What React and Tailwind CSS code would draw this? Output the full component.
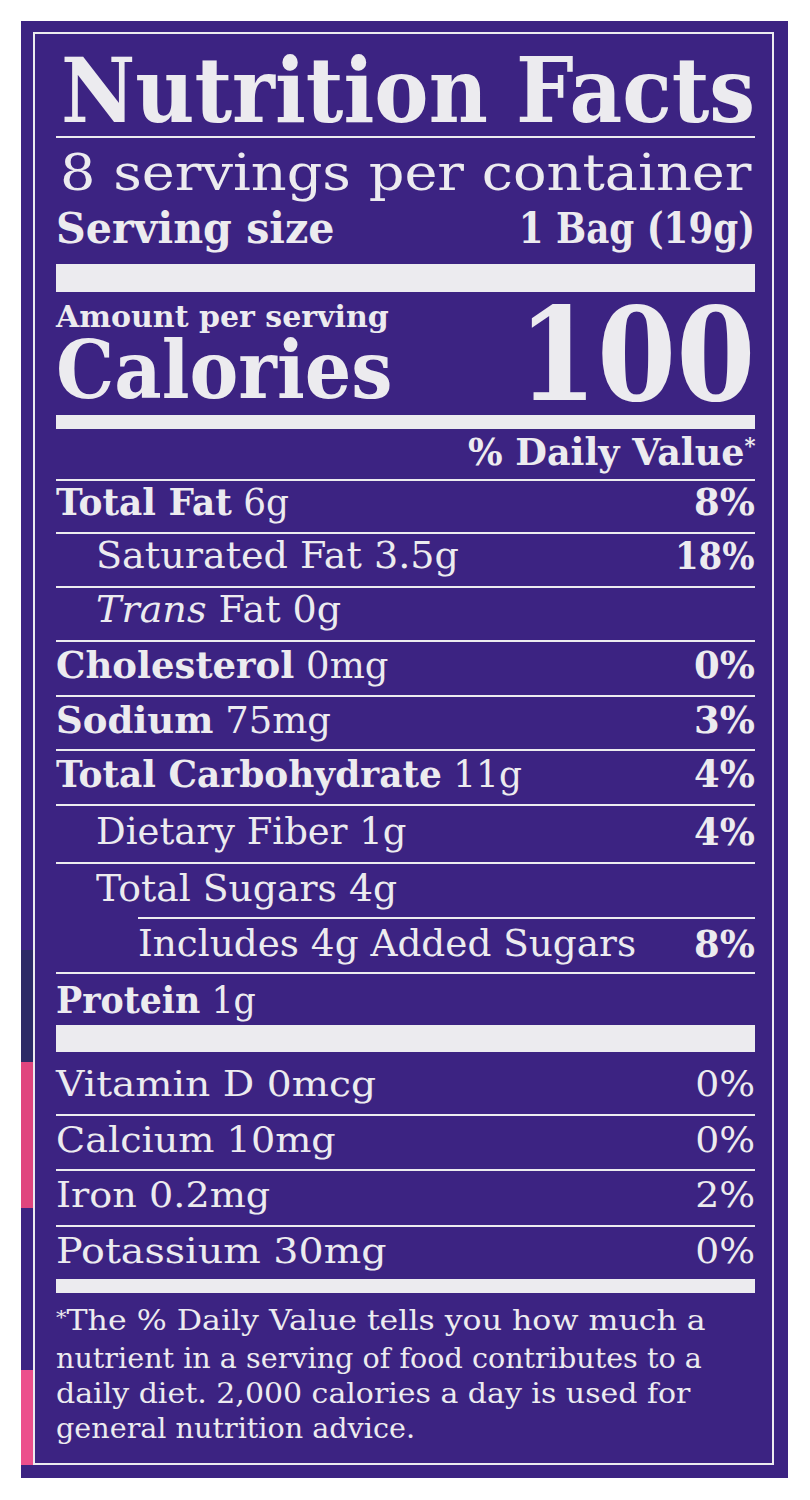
import React from "react";

const Line = ({ className = "" }) => <div className={`h-[2px] bg-[#ecebef] ${className}`} />;

function Row({ h, pt, indent = "", sx, children, pct, psx = "scale-x-100" }) {
  return (
    <div className={`flex justify-between items-start text-[37px] leading-[40px] ${h} ${pt}`}>
      <div className={indent}>
        <span className={`inline-block whitespace-nowrap origin-left ${sx}`}>{children}</span>
      </div>
      {pct && (
        <span className={`inline-block font-bold whitespace-nowrap origin-right ${psx}`}>{pct}</span>
      )}
    </div>
  );
}

function Vit({ h, pt, sx, children, pct }) {
  return (
    <div className={`flex justify-between items-start text-[36px] leading-[40px] ${h} ${pt}`}>
      <span className={`inline-block whitespace-nowrap origin-left ${sx}`}>{children}</span>
      <span className="inline-block whitespace-nowrap origin-right scale-x-[1.05]">{pct}</span>
    </div>
  );
}

export default function App() {
  return (
    <div className="w-[810px] h-[1500px] bg-white pt-[21px] pl-[21px] font-['DejaVu_Serif',serif] text-[#ecebef]">
      <div className="flex w-[767px] h-[1457px] bg-[#3c2382]">
        {/* packaging peeking out at the left edge */}
        <div className="flex flex-col w-[12px] shrink-0">
          <div className="h-[929px] bg-[#3c2382]" />
          <div className="h-[112px] bg-[#2c2a66]" />
          <div className="h-[146px] bg-[#e0457e]" />
          <div className="h-[162px] bg-[#3c2382]" />
          <div className="h-[95px] bg-[#ec4f8c]" />
          <div className="flex-1 bg-[#3c2382]" />
        </div>

        <div className="w-[755px] shrink-0 pt-[11px] pb-[13px] pr-[14px]">
          <div className="w-[741px] h-full border-2 border-[#ecebef] pl-[21px] pr-[17px] flex flex-col overflow-hidden">
            {/* header */}
            <div className="h-[102px] pt-[10px] pl-[5px] text-[90px] leading-[92px] font-bold">
              <span className="inline-block whitespace-nowrap origin-left scale-x-[0.904]">Nutrition Facts</span>
            </div>
            <Line />
            <div className="h-[70px] pl-[4px] text-[50px] leading-[70px]">
              <span className="inline-block whitespace-nowrap origin-left scale-x-[1.115]">8 servings per container</span>
            </div>
            <div className="h-[56px] pb-[15px] flex justify-between text-[42px] leading-[41px] font-bold">
              <span className="inline-block whitespace-nowrap origin-left scale-x-[0.98]">Serving size</span>
              <span className="inline-block whitespace-nowrap origin-right scale-x-[0.85]">1 Bag (19g)</span>
            </div>
            <div className="h-[28px] bg-[#ecebef]" />

            {/* calories */}
            <div className="h-[123px] flex justify-between font-bold">
              <div>
                <div className="pt-[7px] text-[30px] leading-[36px]">
                  <span className="inline-block whitespace-nowrap">Amount per serving</span>
                </div>
                <div className="text-[80px] leading-[70px]">
                  <span className="inline-block whitespace-nowrap origin-left scale-x-[0.915]">Calories</span>
                </div>
              </div>
              <div className="pt-[8px] text-[130px] leading-[110px]">
                <span className="inline-block whitespace-nowrap origin-right scale-x-[0.875]">100</span>
              </div>
            </div>
            <div className="h-[14px] bg-[#ecebef]" />

            <div className="h-[50px] flex justify-end text-[38px] leading-[46px] font-bold">
              <span className="inline-block whitespace-nowrap origin-right scale-x-[0.96]">
                % Daily Value<span className="relative -top-[12px] text-[22px]">*</span>
              </span>
            </div>

            {/* nutrients */}
            <Line />
            <Row h="h-[51px]" pt="pt-[1px]" sx="scale-x-[0.97]" pct="8%">
              <b>Total Fat</b> 6g
            </Row>
            <Line />
            <Row h="h-[52px]" pt="pt-[2px]" indent="pl-[40px]" sx="scale-x-[1.03]" pct="18%" psx="scale-x-[0.92]">
              Saturated Fat 3.5g
            </Row>
            <Line />
            <Row h="h-[52px]" pt="pt-[2px]" indent="pl-[40px]" sx="scale-x-[1.03]">
              <i>Trans</i> Fat 0g
            </Row>
            <Line />
            <Row h="h-[53px]" pt="pt-[3px]" sx="scale-x-100" pct="0%">
              <b>Cholesterol</b> 0mg
            </Row>
            <Line />
            <Row h="h-[52px]" pt="pt-[3px]" sx="scale-x-100" pct="3%">
              <b>Sodium</b> 75mg
            </Row>
            <Line />
            <Row h="h-[53px]" pt="pt-[3px]" sx="scale-x-[0.97]" pct="4%">
              <b>Total Carbohydrate</b> 11g
            </Row>
            <Line />
            <Row h="h-[56px]" pt="pt-[6px]" indent="pl-[40px]" sx="scale-x-100" pct="4%">
              Dietary Fiber 1g
            </Row>
            <Line />
            <Row h="h-[53px]" pt="pt-[5px]" indent="pl-[40px]" sx="scale-x-[1.02]">
              Total Sugars 4g
            </Row>
            <Line className="ml-[82px]" />
            <Row h="h-[53px]" pt="pt-[5px]" indent="pl-[82px]" sx="scale-x-[1.01]" pct="8%">
              Includes 4g Added Sugars
            </Row>
            <Line />
            <Row h="h-[51px]" pt="pt-[6px]" sx="scale-x-[0.94]">
              <b>Protein</b> 1g
            </Row>
            <div className="h-[27px] bg-[#ecebef]" />

            {/* vitamins & minerals */}
            <Vit h="h-[62px]" pt="pt-[12px]" sx="scale-x-[1.09]" pct="0%">
              Vitamin D 0mcg
            </Vit>
            <Line />
            <Vit h="h-[53px]" pt="pt-[4px]" sx="scale-x-[1.06]" pct="0%">
              Calcium 10mg
            </Vit>
            <Line />
            <Vit h="h-[54px]" pt="pt-[4px]" sx="scale-x-[1.06]" pct="2%">
              Iron 0.2mg
            </Vit>
            <Line />
            <Vit h="h-[52px]" pt="pt-[4px]" sx="scale-x-[1.1]" pct="0%">
              Potassium 30mg
            </Vit>
            <div className="h-[14px] bg-[#ecebef]" />

            {/* footnote */}
            <div className="pt-[10px] text-[27px] leading-[35px]">
              <span className="inline-block whitespace-nowrap origin-left scale-x-[1.17]">
                <span className="relative -top-[6px] text-[18px]">*</span>The % Daily Value tells you how much a
              </span>
              <br />
              <span className="inline-block whitespace-nowrap origin-left scale-x-[1.06]">
                nutrient in a serving of food contributes to a
              </span>
              <br />
              <span className="inline-block whitespace-nowrap origin-left scale-x-[1.11]">
                daily diet. 2,000 calories a day is used for
              </span>
              <br />
              <span className="inline-block whitespace-nowrap origin-left scale-x-[1.06]">general nutrition advice.</span>
            </div>
          </div>
        </div>
      </div>
    </div>
  );
}
